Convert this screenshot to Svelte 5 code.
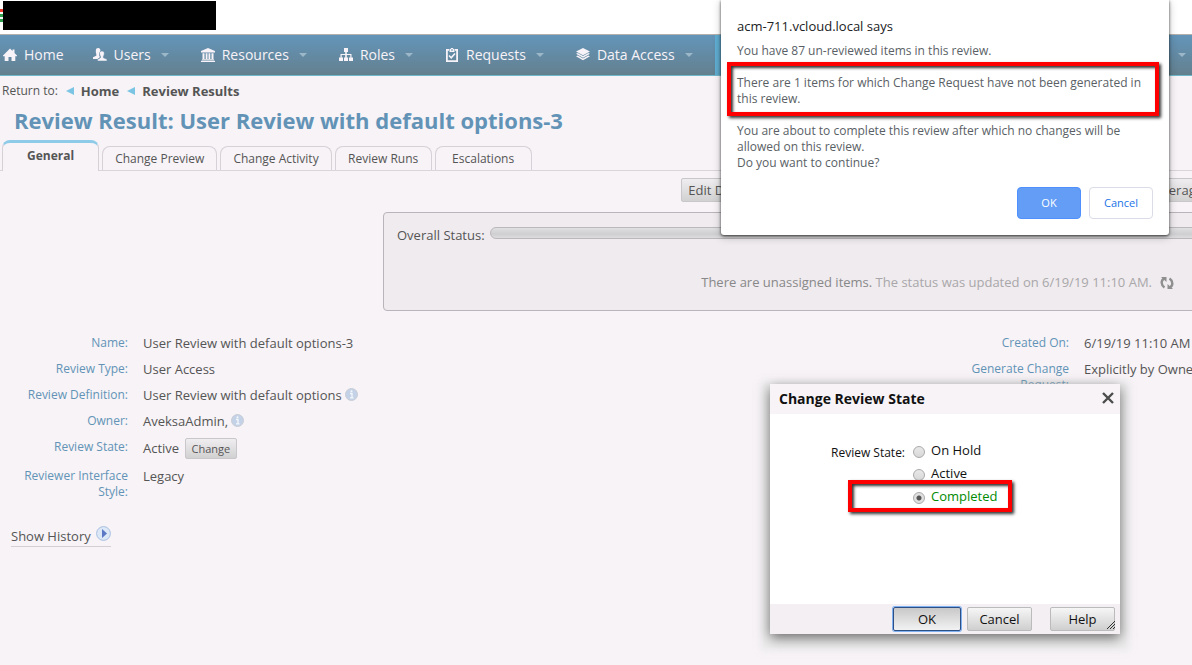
<script lang="ts">
    let reviewState = $state("Completed");
    let activeTab = $state("General");

    const navItems = [
        { label: "Home", icon: "home", menu: false },
        { label: "Users", icon: "users", menu: true },
        { label: "Resources", icon: "resources", menu: true },
        { label: "Roles", icon: "roles", menu: true },
        { label: "Requests", icon: "requests", menu: true },
        { label: "Data Access", icon: "data", menu: true }
    ];

    const tabs = ["General", "Change Preview", "Change Activity", "Review Runs", "Escalations"];
    const states = ["On Hold", "Active", "Completed"];
</script>

{#snippet info()}
    <svg class="info" width="13" height="13" viewBox="0 0 13 13" aria-hidden="true">
        <circle cx="6.5" cy="6.5" r="6" fill="#c3d2e6" stroke="#c9cdd6" />
        <path d="M5 5.5h2v4.300M5 9.800h3.500" fill="none" stroke="#f4f8fc" stroke-width="1.300" />
        <circle cx="6.500" cy="3.200" r="1" fill="#f4f8fc" />
    </svg>
{/snippet}

<div class="page">
    <header>
        <div class="stripes"><i></i><i></i><i></i></div>
        <div class="logo"></div>
    </header>

    <nav>
        {#each navItems as item}
            <a href="#{item.icon}">
                <svg width="14" height="14" viewBox="0 0 14 14" fill="#f7f3f8" aria-hidden="true">
                    {#if item.icon === "home"}
                        <path d="M7 .5 9.5 3V1.5h2V5L14 7.5v.8h-1.7V13H8.5V9h-3v4H1.7V8.3H0v-.8z" />
                    {:else if item.icon === "users"}
                        <path d="M2.800 2.600C2.800.8 3.800 0 5.200 0s2.300 1 2.200 2.600c0 .6-.1 1-.3 1.400-1 1-1.300 2.800-.4 4.500v1L4.500 11H0V9.300l3.300-1.600V6c-.4-.9-.6-2-.5-3.400z" />
                        <path d="M6.500 5.700C6.500 3.800 7.500 3 9 3s2.400 1 2.300 2.800c0 1-.4 1.700-.9 2.400v1.600L14 11.300V13H4.500v-1.500L7.500 9.800V8.200c-.6-.8-1-1.500-1-2.500z" stroke="#6189a6" stroke-width=".5" />
                    {:else if item.icon === "resources"}
                        <path d="M7 0 14 3v1.500H0V3zM1.500 5.200h2V11h-2zM4.700 5.200h1.800V11H4.700zM7.500 5.200h1.800V11H7.500zM10.500 5.200h2V11h-2zM1 11.300h12v1H1zM0 12.800h14V14H0z" />
                    {:else if item.icon === "roles"}
                        <path d="M5 0h4v4H7.800v2H12.500v3.500H14V13h-4V9.500h1.300V7H7.800v2.500H9V13H5V9.500h1.200V7H2.700v2.500H4V13H0V9.500h1.500V6h4.700V4H5z" />
                    {:else if item.icon === "requests"}
                        <path fill-rule="evenodd" d="M1 1h3v1.800H2.800v9.400h8.400V2.800H10V1h3v13H1zM4.500 1h1.300V0h2.400v1h1.300v3h-5zM6 1.500v1h2v-1z" />
                        <path d="m4 7.500 2.200 2.300L10 5.500" fill="none" stroke="#f7f3f8" stroke-width="1.600" />
                    {:else}
                        <path d="m7 0 7 3.500L7 7.200 0 3.500zM0 5.700l1.700-.8L7 7.900l5.300-3 1.700.8-7 4zM0 8.300l1.700-.8L7 10.500l5.300-3 1.700.8-7 4z" />
                    {/if}
                </svg>
                <span>{item.label}</span>
                {#if item.menu}<b class="caret"></b>{/if}
            </a>
        {/each}
        <a class="current" href="#reviews" aria-label="Reviews"><b class="caret"></b></a>
    </nav>

    <div class="crumbs">
        <span>Return to:</span>
        <a href="#home"><i class="back"></i>Home</a>
        <a href="#results"><i class="back"></i>Review Results</a>
    </div>

    <h1>Review Result: User Review with default options-3</h1>

    <div class="tabs">
        {#each tabs as tab}
            <button type="button" class={{ tab: true, active: tab === activeTab }} onclick={() => (activeTab = tab)}>{tab}</button>
        {/each}
    </div>

    <div class="actions">
        <button type="button" class="btn">Edit Definition</button>
        <button type="button" class="btn">Coverage</button>
    </div>

    <section class="status">
        <div class="overall">
            <span>Overall Status:</span>
            <div class="bar"></div>
        </div>
        <p>
            <span>There are unassigned items. <em>The status was updated on 6/19/19 11:10 AM.</em></span>
            <button type="button" class="refresh" aria-label="Refresh">
                <svg width="14" height="14" viewBox="0 0 14 14" fill="none" stroke="#8f8f8f" stroke-width="2.400">
                    <path d="M4 2.500C.8 4.500.8 9 4.500 11.500M10 11.500c3.200-2 3.200-6.500-.5-9" />
                    <path d="M1 1h5.500v5zM13 13H7.500V8z" fill="#8f8f8f" stroke="none" />
                </svg>
            </button>
        </p>
    </section>

    <div class="details">
        <dl>
            <dt>Name:</dt>
            <dd>User Review with default options-3</dd>
            <dt>Review Type:</dt>
            <dd>User Access</dd>
            <dt>Review Definition:</dt>
            <dd>User Review with default options {@render info()}</dd>
            <dt>Owner:</dt>
            <dd>AveksaAdmin, {@render info()}</dd>
            <dt>Review State:</dt>
            <dd class="state">Active <button type="button" class="btn small">Change</button></dd>
            <dt>Reviewer Interface Style:</dt>
            <dd>Legacy</dd>
        </dl>
        <dl>
            <dt>Created On:</dt>
            <dd>6/19/19 11:10 AM</dd>
            <dt>Generate Change Request:</dt>
            <dd>Explicitly by Owner</dd>
        </dl>
    </div>

    <a class="history" href="#history">
        Show History
        <svg width="15" height="15" viewBox="0 0 15 15" aria-hidden="true">
            <circle cx="7.500" cy="7.500" r="6.900" fill="#dce8f6" stroke="#a9bfe0" />
            <path d="M6 3v9l5-4.500z" fill="#5a78c4" />
        </svg>
    </a>

    <form class="dialog" onsubmit={(e) => e.preventDefault()}>
        <div class="dialog-head">
            <h2>Change Review State</h2>
            <button type="button" class="close" aria-label="Close">
                <svg width="12" height="12" viewBox="0 0 12 12" stroke="#4c4c4c" stroke-width="2.400">
                    <path d="m1 1 10 10M11 1 1 11" />
                </svg>
            </button>
        </div>
        <div class="dialog-body" role="radiogroup" aria-labelledby="state-label">
            <span id="state-label">Review State:</span>
            <div class="options">
                {#each states as name}
                    <label class={{ done: name === "Completed" }}>
                        <input type="radio" name="state" value={name} bind:group={reviewState} />
                        {name}
                    </label>
                {/each}
            </div>
            <div class="mark mark-state"></div>
        </div>
        <div class="dialog-foot">
            <button type="submit" class="push focused">OK</button>
            <button type="button" class="push">Cancel</button>
            <button type="button" class="push help">Help</button>
            <svg class="grip" width="8" height="8" viewBox="0 0 8 8" stroke="#333" aria-hidden="true">
                <path d="M0 8 8 0M3 8l5-5M6 8l2-2" />
            </svg>
        </div>
    </form>

    <div class="alert" role="alertdialog" aria-labelledby="alert-title">
        <h2 id="alert-title">acm-711.vcloud.local says</h2>
        <p>You have 87 un-reviewed items in this review.</p>
        <p>There are 1 items for which Change Request have not been generated in this review.</p>
        <p>You are about to complete this review after which no changes will be allowed on this review.<br />Do you want to continue?</p>
        <div class="alert-buttons">
            <button type="button" class="primary">OK</button>
            <button type="button">Cancel</button>
        </div>
        <div class="mark mark-alert"></div>
    </div>
</div>

<style>
    :global(body) {
        background: #f7f3f7;
    }

    .page {
        position: relative;
        min-height: 100vh;
        overflow: hidden;
        font: 13px/16px "Open Sans", sans-serif;
        color: #555;
    }

    button {
        font: inherit;
        color: inherit;
        cursor: pointer;
    }

    a {
        color: inherit;
        text-decoration: none;
    }

    header {
        display: flex;
        align-items: flex-start;
        height: 34px;
        background: #fff;
    }

    .stripes {
        display: grid;
        gap: 2px;
        width: 3px;
        padding-top: 9px;
    }

    .stripes i {
        height: 3px;
        background: #2f9e4f;
    }

    .stripes i:first-child {
        background: #f03c2e;
    }

    .logo {
        width: 213px;
        height: 29px;
        margin-top: 1px;
        background: #000;
    }

    nav {
        display: flex;
        height: 40px;
        border-top: 1px solid #b3b0ab;
        border-bottom: 1px solid #70b9cc;
        background: linear-gradient(#6395b9, #64808f);
        color: #f7f3f8;
        font-size: 14px;
    }

    nav a {
        display: flex;
        align-items: center;
        padding: 0 16px;
    }

    nav a:first-child {
        padding: 0 13px 0 3px;
    }

    nav a span {
        margin-left: 7px;
    }

    .caret {
        margin-left: 10px;
        border: 4px solid transparent;
        border-top-color: #9cb8c8;
        border-bottom: 0;
    }

    nav .current {
        flex: 1;
        justify-content: flex-end;
        margin-left: 6px;
        padding-right: 6px;
        background: linear-gradient(90deg, #5fb0d5, transparent 20px);
    }

    .crumbs {
        display: flex;
        gap: 8px;
        padding: 7px 2px 0;
        font-size: 12px;
    }

    .crumbs a {
        display: flex;
        align-items: center;
        gap: 7px;
        font-size: 13px;
        font-weight: bold;
    }

    .back {
        border: 4px solid transparent;
        border-right: 8px solid #7cc4e4;
        border-left: 0;
    }

    h1 {
        margin: 7px 14px 0;
        font-size: 22px;
        line-height: 28px;
        color: #6293b6;
    }

    .tabs {
        display: flex;
        align-items: flex-end;
        gap: 3px;
        margin-top: 6px;
        padding-left: 2px;
        border-bottom: 1px solid #d9d5da;
    }

    .tab {
        min-width: 97px;
        padding: 4px 12px 3px;
        border: 1px solid #d5d1d6;
        border-bottom: 0;
        border-radius: 8px 8px 0 0;
        background: none;
        font-size: 12px;
    }

    .tab.active {
        margin-bottom: -1px;
        padding: 5px 24px 7px;
        border-top: 3px solid #8ecbe8;
        background: #f7f3f7;
        font-weight: bold;
    }

    .actions {
        display: flex;
        justify-content: flex-end;
        gap: 6px;
        margin-right: -18px;
        padding-top: 7px;
    }

    .btn {
        height: 24px;
        padding: 0 6px;
        border: 1px solid #c9c7c9;
        border-radius: 2px;
        background: linear-gradient(#efedef, #d2d1d2);
    }

    .actions .btn:first-child {
        width: 452px;
        text-align: left;
    }

    .btn.small {
        height: 21px;
        margin-left: 2px;
        font-size: 11px;
    }

    .status {
        margin: 10px -13px 0 383px;
        padding: 12px 13px 20px;
        border: 1px solid #b9b4b9;
        border-radius: 4px;
        background: #efebef;
    }

    .overall {
        display: flex;
        gap: 5px;
        height: 49px;
        line-height: 20px;
    }

    .bar {
        flex: 1;
        height: 10px;
        margin: 2px -12px 0 0;
        border: 1px solid #bbb8bb;
        border-radius: 6px;
        background: linear-gradient(#e0dfe1, #cfced0 60%, #dddcde);
    }

    .status p {
        display: flex;
        justify-content: flex-end;
        gap: 8px;
        margin: 0;
        padding-right: 17px;
        color: #888;
    }

    .status em {
        font-style: normal;
        color: #a9a7a9;
    }

    .refresh {
        display: grid;
        place-items: center;
        padding: 2px 0 0;
        border: 0;
        background: none;
    }

    .details {
        display: grid;
        grid-template-columns: 1fr 251px;
        margin-top: 19px;
    }

    dl {
        display: grid;
        grid-template-columns: 128px 1fr;
        align-content: start;
        column-gap: 15px;
        margin: 0;
    }

    dt,
    dd {
        min-height: 16px;
        margin: 0;
        padding: 5px 0;
    }

    dt {
        font-size: 12px;
        text-align: right;
        color: #6293b6;
    }

    dd {
        white-space: nowrap;
    }

    dd.state {
        padding: 4px 0;
    }

    .info {
        vertical-align: -1px;
    }

    .history {
        display: inline-flex;
        gap: 5px;
        margin: 21px 11px 0;
        border-bottom: 1px solid #d3d0d3;
        line-height: 20px;
    }

    .mark {
        position: absolute;
        border: 4px solid #f00;
        box-shadow: 2px 2px 3px #333, inset 2px 2px 3px #333;
        pointer-events: none;
    }

    .dialog {
        position: absolute;
        top: 384px;
        right: 72px;
        width: 350px;
        background: #fff;
        box-shadow: 0 4px 12px rgba(0, 0, 0, 0.55), 0 7px 6px 9px rgba(225, 230, 225, 0.5);
        color: #111;
    }

    .dialog-head {
        display: flex;
        justify-content: space-between;
        align-items: center;
        height: 30px;
        padding: 0 6px 0 9px;
        background: #f7f3f7;
    }

    h2 {
        margin: 0;
        font-size: 14px;
    }

    .close {
        display: flex;
        padding: 0 0 3px;
        border: 0;
        background: none;
    }

    .dialog-body {
        position: relative;
        display: flex;
        gap: 8px;
        height: 162px;
        padding: 28px 0 0 61px;
    }

    #state-label {
        margin-top: 3px;
        font-size: 12px;
    }

    .options label {
        display: flex;
        align-items: center;
        gap: 6px;
        height: 16px;
        margin-bottom: 7px;
    }

    .options .done {
        color: #008a00;
    }

    input[type="radio"] {
        appearance: none;
        width: 12px;
        height: 12px;
        margin: 3px 0 0;
        border: 1px solid #aaa;
        border-radius: 50%;
        background: linear-gradient(#e8e8e8, #d8d8d8);
    }

    input[type="radio"]:checked {
        background: radial-gradient(#555 0 2px, #e0e0e0 3px);
    }

    .mark-state {
        top: 66px;
        left: 78px;
        width: 156px;
        height: 24px;
    }

    .dialog-foot {
        position: relative;
        display: flex;
        justify-content: flex-end;
        gap: 6px;
        padding: 3px 5px;
        background: #f3eff3;
    }

    .push {
        width: 65px;
        height: 24px;
        padding: 0;
        border: 1px solid #bbb;
        border-radius: 2px;
        background: linear-gradient(#f6f6f6, #cfcfcf);
    }

    .push.focused {
        width: 68px;
        border-color: #2d4f85;
        background: linear-gradient(#c8c8c8, #f2f2f2);
        box-shadow: 0 0 0 1px #7fb0f0;
    }

    .push.help {
        margin-left: 12px;
    }

    .grip {
        position: absolute;
        right: 5px;
        bottom: 5px;
    }

    .alert {
        position: absolute;
        top: 0;
        right: 23px;
        box-sizing: border-box;
        width: 448px;
        padding: 18px 16px 16px;
        border-radius: 0 0 3px 3px;
        background: #fff;
        box-shadow: 0 1px 3px rgba(0, 0, 0, 0.7), 0 2px 8px rgba(0, 0, 0, 0.25);
        color: #5a5f66;
        font-size: 12px;
    }

    .alert h2 {
        margin-bottom: 9px;
        color: #202124;
        font-size: 13px;
        font-weight: normal;
    }

    .alert p {
        margin: 0 0 16px;
    }

    .alert-buttons {
        display: flex;
        justify-content: flex-end;
        gap: 8px;
    }

    .alert-buttons button {
        width: 64px;
        height: 32px;
        border: 1px solid #dadce8;
        border-radius: 4px;
        background: #fff;
        color: #1a73e8;
        font-size: 11px;
    }

    .alert-buttons .primary {
        border-color: #4d90fe;
        background: #639df6;
        color: #fff;
    }

    .mark-alert {
        top: 62px;
        left: 6px;
        width: 424px;
        height: 46px;
    }
</style>
